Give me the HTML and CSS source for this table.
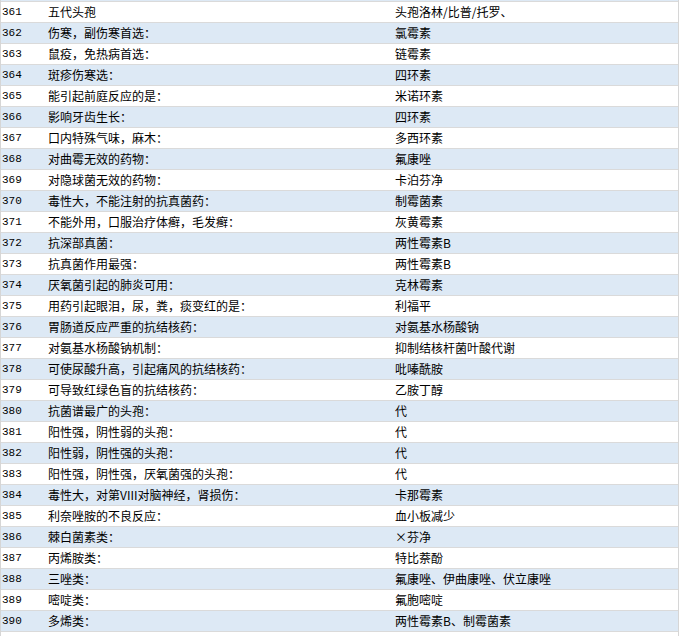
FILE: index.html
```html
<!DOCTYPE html>
<html>
<head>
<meta charset="utf-8">
<link rel="stylesheet" href="styles.css">
</head>
<body>
<div class="tbl">
  <div class="row prev"></div>
  <div class="row"><span class="n">361</span><span class="q">五代头孢</span><span class="a">头孢洛林/比普/托罗、</span></div>
  <div class="row alt"><span class="n">362</span><span class="q">伤寒，副伤寒首选：</span><span class="a">氯霉素</span></div>
  <div class="row"><span class="n">363</span><span class="q">鼠疫，免热病首选：</span><span class="a">链霉素</span></div>
  <div class="row alt"><span class="n">364</span><span class="q">斑疹伤寒选：</span><span class="a">四环素</span></div>
  <div class="row"><span class="n">365</span><span class="q">能引起前庭反应的是：</span><span class="a">米诺环素</span></div>
  <div class="row alt"><span class="n">366</span><span class="q">影响牙齿生长：</span><span class="a">四环素</span></div>
  <div class="row"><span class="n">367</span><span class="q">口内特殊气味，麻木：</span><span class="a">多西环素</span></div>
  <div class="row alt"><span class="n">368</span><span class="q">对曲霉无效的药物：</span><span class="a">氟康唑</span></div>
  <div class="row"><span class="n">369</span><span class="q">对隐球菌无效的药物：</span><span class="a">卡泊芬净</span></div>
  <div class="row alt"><span class="n">370</span><span class="q">毒性大，不能注射的抗真菌药：</span><span class="a">制霉菌素</span></div>
  <div class="row"><span class="n">371</span><span class="q">不能外用，口服治疗体癣，毛发癣：</span><span class="a">灰黄霉素</span></div>
  <div class="row alt"><span class="n">372</span><span class="q">抗深部真菌：</span><span class="a">两性霉素B</span></div>
  <div class="row"><span class="n">373</span><span class="q">抗真菌作用最强：</span><span class="a">两性霉素B</span></div>
  <div class="row alt"><span class="n">374</span><span class="q">厌氧菌引起的肺炎可用：</span><span class="a">克林霉素</span></div>
  <div class="row"><span class="n">375</span><span class="q">用药引起眼泪，尿，粪，痰变红的是：</span><span class="a">利福平</span></div>
  <div class="row alt"><span class="n">376</span><span class="q">胃肠道反应严重的抗结核药：</span><span class="a">对氨基水杨酸钠</span></div>
  <div class="row"><span class="n">377</span><span class="q">对氨基水杨酸钠机制：</span><span class="a">抑制结核杆菌叶酸代谢</span></div>
  <div class="row alt"><span class="n">378</span><span class="q">可使尿酸升高，引起痛风的抗结核药：</span><span class="a">吡嗪酰胺</span></div>
  <div class="row"><span class="n">379</span><span class="q">可导致红绿色盲的抗结核药：</span><span class="a">乙胺丁醇</span></div>
  <div class="row alt"><span class="n">380</span><span class="q">抗菌谱最广的头孢：</span><span class="a">代</span></div>
  <div class="row"><span class="n">381</span><span class="q">阳性强，阴性弱的头孢：</span><span class="a">代</span></div>
  <div class="row alt"><span class="n">382</span><span class="q">阳性弱，阴性强的头孢：</span><span class="a">代</span></div>
  <div class="row"><span class="n">383</span><span class="q">阳性强，阴性强，厌氧菌强的头孢：</span><span class="a">代</span></div>
  <div class="row alt"><span class="n">384</span><span class="q">毒性大，对第VIII对脑神经，肾损伤：</span><span class="a">卡那霉素</span></div>
  <div class="row"><span class="n">385</span><span class="q">利奈唑胺的不良反应：</span><span class="a">血小板减少</span></div>
  <div class="row alt"><span class="n">386</span><span class="q">棘白菌素类：</span><span class="a">×芬净</span></div>
  <div class="row"><span class="n">387</span><span class="q">丙烯胺类：</span><span class="a">特比萘酚</span></div>
  <div class="row alt"><span class="n">388</span><span class="q">三唑类：</span><span class="a">氟康唑、伊曲康唑、伏立康唑</span></div>
  <div class="row"><span class="n">389</span><span class="q">嘧啶类：</span><span class="a">氟胞嘧啶</span></div>
  <div class="row alt"><span class="n">390</span><span class="q">多烯类：</span><span class="a">两性霉素B、制霉菌素</span></div>
</div>
</body>
</html>
```
FILE: styles.css
```css
html, body {
  margin: 0;
  padding: 0;
  background: #ffffff;
}
body {
  font-family: "Noto Sans CJK SC", "Liberation Sans", sans-serif;
  font-size: 12px;
  color: #000000;
}
.tbl {
  width: 677px;
  height: 636px;
  border-left: 1px solid #d6d6d6;
  border-right: 1px solid #d6d6d6;
  overflow: hidden;
}
.row {
  display: grid;
  grid-template-columns: 46px 347px 1fr;
  height: 20px;
  line-height: 20px;
  padding-left: 1px;
  border-bottom: 1px solid #dadada;
  background: #ffffff;
  white-space: nowrap;
}
.row.alt, .row.prev {
  background: #dde9f5;
}
.row.prev {
  height: 1px;
}
.n {
  font-family: "Liberation Mono", monospace;
  font-size: 11px;
}
```
